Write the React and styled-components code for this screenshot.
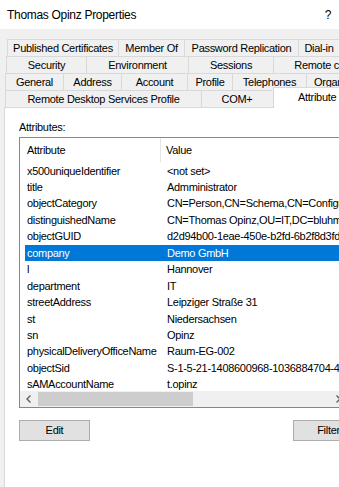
import React from "react";
import styled, { createGlobalStyle } from "styled-components";

const GlobalStyle = createGlobalStyle`
  html, body {
    margin: 0;
    padding: 0;
    overflow: hidden;
    background: #f0f0f0;
  }
  body {
    font-family: "Liberation Sans", Arial, sans-serif;
    color: #000;
  }
`;

const tabRows = [
  {
    indent: 7,
    tabs: [
      ["Published Certificates", 111],
      ["Member Of", 66],
      ["Password Replication", 114],
      ["Dial-in", 41],
    ],
  },
  {
    indent: 6,
    tabs: [
      ["Security", 80],
      ["Environment", 102],
      ["Sessions", 85],
      ["Remote control", 112],
    ],
  },
  {
    indent: 5,
    tabs: [
      ["General", 58],
      ["Address", 58],
      ["Account", 66],
      ["Profile", 45],
      ["Telephones", 74],
      ["Organization", 74],
    ],
  },
];

const attributes = [
  ["x500uniqueIdentifier", "<not set>"],
  ["title", "Admministrator"],
  ["objectCategory", "CN=Person,CN=Schema,CN=Configuration,DC=bluhm-it,DC=de"],
  ["distinguishedName", "CN=Thomas Opinz,OU=IT,DC=bluhm-it,DC=de"],
  ["objectGUID", "d2d94b00-1eae-450e-b2fd-6b2f8d3fd8a1"],
  ["company", "Demo GmbH"],
  ["l", "Hannover"],
  ["department", "IT"],
  ["streetAddress", "Leipziger Straße 31"],
  ["st", "Niedersachsen"],
  ["sn", "Opinz"],
  ["physicalDeliveryOfficeName", "Raum-EG-002"],
  ["objectSid", "S-1-5-21-1408600968-1036884704-4251"],
  ["sAMAccountName", "t.opinz"],
];

export default function App() {
  return (
    <>
      <GlobalStyle />
      <Window>
        <TitleBar>
          <Title>Thomas Opinz Properties</Title>
          <Help>?</Help>
        </TitleBar>

        <Tabs>
          {tabRows.map((row, i) => (
            <TabRow key={i} $indent={row.indent}>
              {row.tabs.map(([label, w]) => (
                <Tab key={label} $w={w}>
                  {label}
                </Tab>
              ))}
            </TabRow>
          ))}
          <TabRow $indent={5}>
            <Tab $w={196}>Remote Desktop Services Profile</Tab>
            <Tab $w={71}>COM+</Tab>
            <ActiveTab $w={118}>Attribute Editor</ActiveTab>
          </TabRow>
        </Tabs>

        <Panel>
          <Label>Attributes:</Label>
          <ListBox>
            <Header>
              <HeadCell $first>Attribute</HeadCell>
              <HeadCell>Value</HeadCell>
            </Header>
            <Rows>
              {attributes.map(([name, value]) => (
                <Row key={name} $selected={name === "company"}>
                  <Cell>{name}</Cell>
                  <Cell>{value}</Cell>
                </Row>
              ))}
            </Rows>
            <HScroll>
              <Arrow>
                <svg width="8" height="8" viewBox="0 0 8 8">
                  <polyline points="5.5,0.5 2,4 5.5,7.5" fill="none" stroke="#606060" strokeWidth="1.4" />
                </svg>
              </Arrow>
              <Thumb />
              <Arrow>
                <svg width="8" height="8" viewBox="0 0 8 8">
                  <polyline points="2.5,0.5 6,4 2.5,7.5" fill="none" stroke="#606060" strokeWidth="1.4" />
                </svg>
              </Arrow>
            </HScroll>
          </ListBox>

          <ButtonRow>
            <Button>Edit</Button>
            <Button>Filter</Button>
          </ButtonRow>
        </Panel>
      </Window>
    </>
  );
}

const Window = styled.div`
  width: 339px;
  height: 487px;
  overflow: hidden;
  display: flex;
  flex-direction: column;
  background: #f0f0f0;
  font-size: 11px;
  letter-spacing: -0.3px;
`;

const TitleBar = styled.div`
  height: 29px;
  flex-shrink: 0;
  background: #fff;
  display: flex;
  align-items: center;
  padding: 0 8px 0 7px;
`;

const Title = styled.div`
  flex: 1;
  font-size: 12px;
  letter-spacing: -0.3px;
`;

const Help = styled.div`
  font-size: 12px;
`;

const Tabs = styled.div`
  margin-top: 10px;
  display: flex;
  flex-direction: column;
  flex-shrink: 0;
`;

const TabRow = styled.div`
  display: flex;
  height: 17px;
  padding-left: ${(p) => p.$indent}px;
`;

const Tab = styled.div`
  flex-shrink: 0;
  box-sizing: border-box;
  width: ${(p) => p.$w}px;
  height: 17px;
  line-height: 16px;
  text-align: center;
  white-space: nowrap;
  border-top: 1px solid #d9d9d9;
  border-left: 1px solid #d9d9d9;
  background: #f0f0f0;
`;

const ActiveTab = styled(Tab)`
  height: 21px;
  margin-top: -3px;
  margin-left: 1px;
  line-height: 19px;
  background: #fff;
  border-right: 1px solid #d9d9d9;
  position: relative;
  z-index: 1;
`;

const Panel = styled.div`
  flex: 1;
  margin-left: 4px;
  background: #fff;
  border-top: 1px solid #d9d9d9;
  border-left: 1px solid #d9d9d9;
  padding-left: 14px;
  overflow: hidden;
`;

const Label = styled.div`
  margin-top: 12px;
  height: 14px;
  line-height: 14px;
`;

const ListBox = styled.div`
  margin-top: 3px;
  width: 328px;
  box-sizing: border-box;
  border: 1px solid #828790;
  display: flex;
  flex-direction: column;
`;

const Header = styled.div`
  display: grid;
  grid-template-columns: 141px 1fr;
  height: 24px;
`;

const HeadCell = styled.div`
  line-height: 24px;
  padding-left: ${(p) => (p.$first ? 7 : 5)}px;
  border-right: ${(p) => (p.$first ? "1px solid #e5e5e5" : "none")};
  white-space: nowrap;
`;

const Rows = styled.div`
  box-sizing: border-box;
  height: 229px;
  padding-top: 0.5px;
  overflow: hidden;
  padding-left: 5px;
`;

const Row = styled.div`
  display: grid;
  grid-template-columns: 140px 1fr;
  height: 16.46px;
  line-height: 16.46px;
  background: ${(p) => (p.$selected ? "#0078d7" : "transparent")};
  color: ${(p) => (p.$selected ? "#fff" : "#000")};
`;

const Cell = styled.div`
  padding-left: 2px;
  white-space: nowrap;
  overflow: hidden;
`;

const HScroll = styled.div`
  height: 16px;
  background: #f0f0f0;
  display: flex;
  align-items: center;
`;

const Arrow = styled.div`
  width: 17px;
  height: 16px;
  flex-shrink: 0;
  display: flex;
  align-items: center;
  justify-content: center;
`;

const Thumb = styled.div`
  width: 155px;
  height: 14px;
  margin-left: 1px;
  margin-right: auto;
  background: #cdcdcd;
`;

const ButtonRow = styled.div`
  margin-top: 12px;
  width: 345px;
  display: flex;
  justify-content: space-between;
`;

const Button = styled.div`
  width: 71px;
  height: 21px;
  box-sizing: border-box;
  border: 1px solid #adadad;
  background: #e1e1e1;
  line-height: 19px;
  text-align: center;
`;
